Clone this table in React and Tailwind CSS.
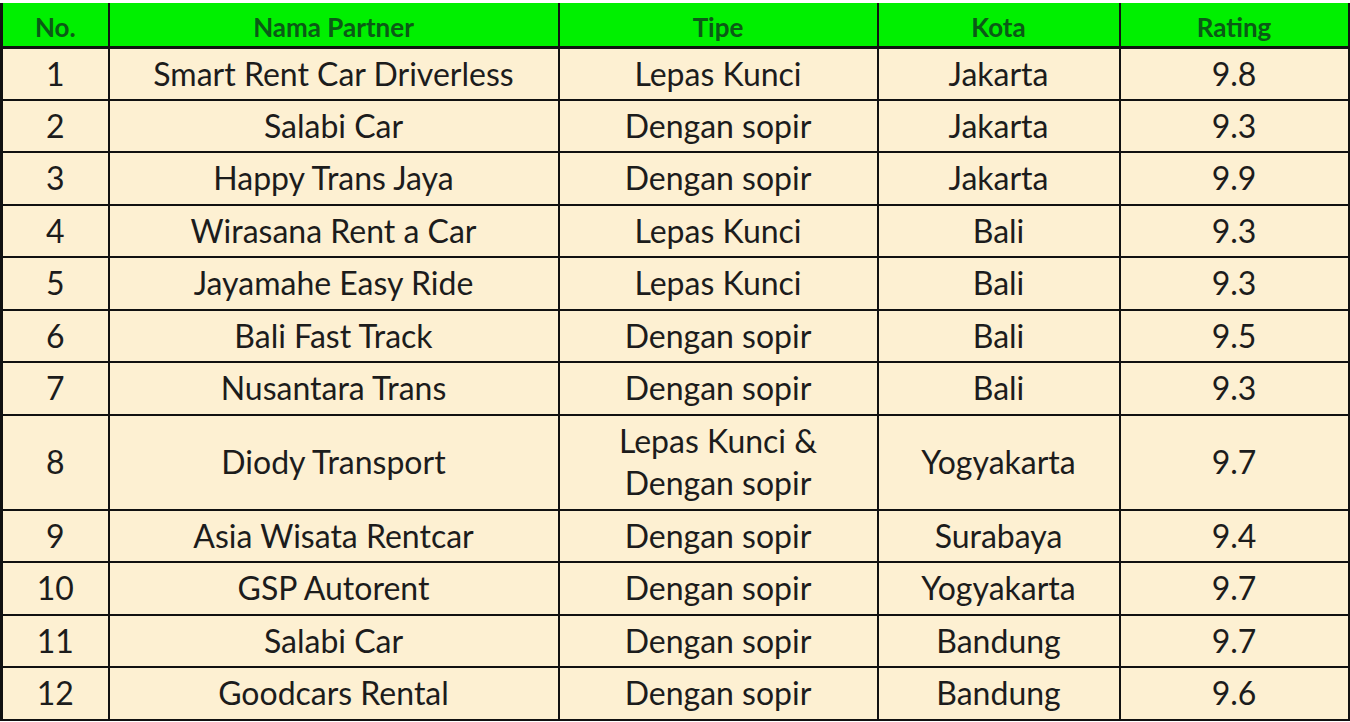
import React from 'react'

const rows = [
  ['1', 'Smart Rent Car Driverless', ['Lepas Kunci'], 'Jakarta', '9.8'],
  ['2', 'Salabi Car', ['Dengan sopir'], 'Jakarta', '9.3'],
  ['3', 'Happy Trans Jaya', ['Dengan sopir'], 'Jakarta', '9.9'],
  ['4', 'Wirasana Rent a Car', ['Lepas Kunci'], 'Bali', '9.3'],
  ['5', 'Jayamahe Easy Ride', ['Lepas Kunci'], 'Bali', '9.3'],
  ['6', 'Bali Fast Track', ['Dengan sopir'], 'Bali', '9.5'],
  ['7', 'Nusantara Trans', ['Dengan sopir'], 'Bali', '9.3'],
  ['8', 'Diody Transport', ['Lepas Kunci &', 'Dengan sopir'], 'Yogyakarta', '9.7'],
  ['9', 'Asia Wisata Rentcar', ['Dengan sopir'], 'Surabaya', '9.4'],
  ['10', 'GSP Autorent', ['Dengan sopir'], 'Yogyakarta', '9.7'],
  ['11', 'Salabi Car', ['Dengan sopir'], 'Bandung', '9.7'],
  ['12', 'Goodcars Rental', ['Dengan sopir'], 'Bandung', '9.6'],
]

const headers = ['No.', 'Nama Partner', 'Tipe', 'Kota', 'Rating']

export default function App() {
  return (
    <div
      className="w-[1350px] h-[722px] bg-white pt-[3px] overflow-hidden"
      style={{ fontFamily: 'Lato, "Open Sans", sans-serif' }}
    >
      <table className="table-fixed border-collapse w-[1347px] text-center">
        <colgroup>
          <col className="w-[107px]" />
          <col className="w-[450px]" />
          <col className="w-[319px]" />
          <col className="w-[242px]" />
          <col className="w-[229px]" />
        </colgroup>
        <thead>
          <tr className="h-[44px] bg-[#00f000]">
            {headers.map((h, i) => (
              <th
                key={h}
                className={`border-b-[3px] border-b-[#111] pt-[5px] leading-none text-[26px] font-bold text-[#0b5a16] ${
                  i === 0 ? 'border-l-[3px] border-l-[#111]' : 'border-l-2 border-l-[#111]'
                } ${i === 4 ? 'border-r-2 border-r-[#111]' : ''}`}
              >
                {h}
              </th>
            ))}
          </tr>
        </thead>
        <tbody>
          {rows.map((r) => (
            <tr
              key={r[0]}
              className={`bg-[#fdf0d2] text-[#1c1c1c] text-[32px] ${
                r[2].length > 1 ? 'h-[95px]' : 'h-[52.5px]'
              }`}
            >
              <td className="border-[#111] border-2 border-l-[3px] leading-none">{r[0]}</td>
              <td className="border-[#111] border-2 leading-none">{r[1]}</td>
              <td className="border-[#111] border-2 leading-[42px]">
                {r[2].map((t) => (
                  <div key={t}>{t}</div>
                ))}
              </td>
              <td className="border-[#111] border-2 leading-none">{r[3]}</td>
              <td className="border-[#111] border-2 leading-none">{r[4]}</td>
            </tr>
          ))}
        </tbody>
      </table>
    </div>
  )
}
